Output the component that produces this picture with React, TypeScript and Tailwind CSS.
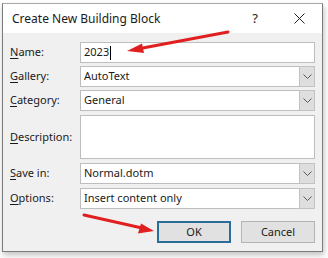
import React from "react";

const font = { fontFamily: '"Segoe UI", "Noto Sans", "Open Sans", sans-serif' };

function Chevron() {
  return (
    <svg width="9" height="5" viewBox="0 0 9 5" className="block">
      <path d="M0.5 0.5 L4.5 4.5 L8.5 0.5" fill="none" stroke="#5a5a5a" strokeWidth="1" />
    </svg>
  );
}

function Select({ value }: { value: string }) {
  return (
    <div className="flex-1 h-full flex items-stretch bg-white border border-[#bdbdbd]">
      <div className="flex-1 flex items-center pl-[3px] text-[11px] text-[#1a1a1a]">{value}</div>
      <div className="w-[16px] my-[-1px] mr-[-1px] bg-[#dedede] border border-[#c2c2c2] flex items-center justify-center">
        <Chevron />
      </div>
    </div>
  );
}

function Label({ first, rest }: { first: string; rest: string }) {
  return (
    <div className="w-[70px] text-[11px] text-[#1a1a1a] shrink-0">
      <span className="underline underline-offset-2">{first}</span>
      {rest}
    </div>
  );
}

export default function App() {
  return (
    <div className="w-[328px] h-[258px] bg-white relative" style={font}>
      <div className="absolute left-[2px] top-[3px] w-[321px] h-[249px] border border-[#7c7c7c] border-t-[#a8a8a8] bg-[#f0f0f0] shadow-[1px_3px_6px_rgba(0,0,0,0.25)] flex flex-col">
        {/* Title bar */}
        <div className="h-[29px] bg-white flex items-center shrink-0">
          <div className="pl-[9px] text-[12px] text-[#1a1a1a] flex-1">Create New Building Block</div>
          <div className="w-[20px] text-center text-[13px] text-[#222] mr-[28px]">?</div>
          <div className="w-[12px] mr-[17px] flex items-center justify-center">
            <svg width="11" height="11" viewBox="0 0 11 11">
              <path d="M0.5 0.5 L10.5 10.5 M10.5 0.5 L0.5 10.5" stroke="#222" strokeWidth="1" />
            </svg>
          </div>
        </div>
        {/* Body */}
        <div className="flex flex-col pl-[7px] pr-[7px] pt-[9px]">
          <div className="flex items-center h-[21px]">
            <Label first="N" rest="ame:" />
            <div className="flex-1 h-full flex items-center bg-white border border-[#bdbdbd] pl-[3px] text-[11px] text-[#1a1a1a]">
              2023<span className="inline-block w-[1px] h-[14px] bg-black ml-[1px]" />
            </div>
          </div>
          <div className="flex items-center h-[21px] mt-[3px]">
            <Label first="G" rest="allery:" />
            <Select value="AutoText" />
          </div>
          <div className="flex items-center h-[21px] mt-[3px]">
            <Label first="C" rest="ategory:" />
            <Select value="General" />
          </div>
          <div className="flex items-center h-[44px] mt-[4px]">
            <Label first="D" rest="escription:" />
            <div className="flex-1 h-full bg-white border border-[#bdbdbd]" />
          </div>
          <div className="flex items-center h-[21px] mt-[4px]">
            <Label first="S" rest="ave in:" />
            <Select value="Normal.dotm" />
          </div>
          <div className="flex items-center h-[21px] mt-[4px]">
            <Label first="O" rest="ptions:" />
            <Select value="Insert content only" />
          </div>
          <div className="flex justify-end gap-[10px] mt-[12px]">
            <div className="w-[74px] h-[22px] bg-[#e1e1e1] border-2 border-[#2a6e98] flex items-center justify-center text-[11px] text-[#1a1a1a]">
              OK
            </div>
            <div className="w-[74px] h-[22px] bg-[#e1e1e1] border border-[#b4b4b4] flex items-center justify-center text-[11px] text-[#1a1a1a]">
              Cancel
            </div>
          </div>
        </div>
      </div>
      {/* Red annotation arrows */}
      <svg className="absolute left-0 top-0 pointer-events-none" width="328" height="258" viewBox="0 0 328 258">
        <line x1="228" y1="32" x2="140" y2="48.5" stroke="#e02020" strokeWidth="3" strokeLinecap="round" />
        <polygon points="127,51 142,43.5 144,53" fill="#e02020" />
        <line x1="84" y1="215" x2="142" y2="228" stroke="#e02020" strokeWidth="3" strokeLinecap="round" />
        <polygon points="154,231 138,233.5 141,223.5" fill="#e02020" />
      </svg>
    </div>
  );
}
